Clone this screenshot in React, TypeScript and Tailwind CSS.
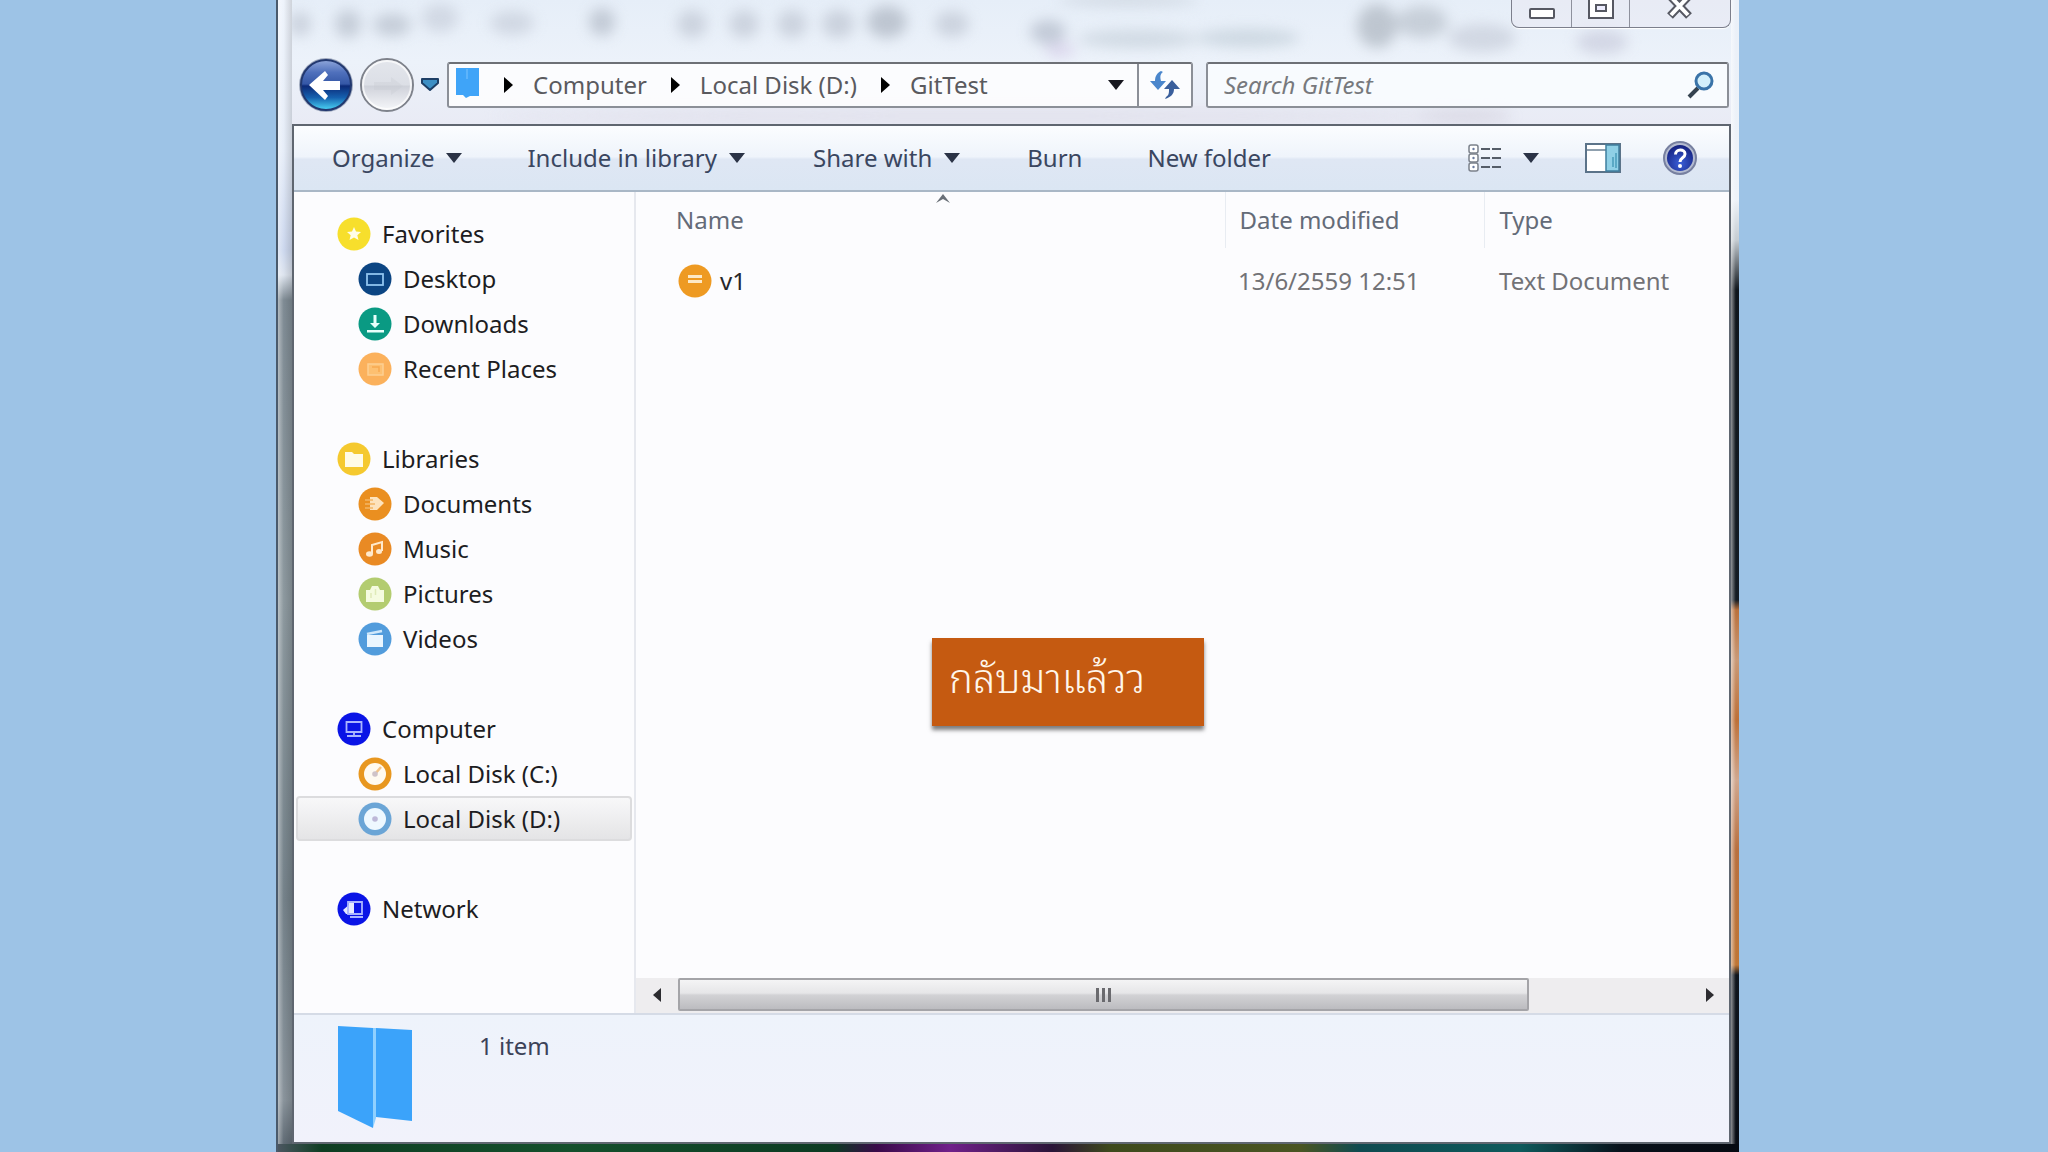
import React from "react";

function DownArrow({ className = "" }: { className?: string }) {
  return (
    <svg viewBox="0 0 16 10" className={`h-[10px] w-4 shrink-0 ${className}`} aria-hidden="true">
      <path d="M0 0h16l-8 10z" fill="currentColor" />
    </svg>
  );
}

function RightArrow() {
  return (
    <svg viewBox="0 0 9 16" className="h-4 w-[9px] shrink-0 text-black" aria-hidden="true">
      <path d="M0 0l9 8-9 8z" fill="currentColor" />
    </svg>
  );
}

function Glass() {
  const blobs: [number, number, number, number, string][] = [
    [8, 24, 11, 12, "#c3cad6"],
    [56, 24, 13, 14, "#bcc4d0"],
    [100, 25, 19, 11, "#bcc4d0"],
    [148, 18, 18, 14, "#ccd3df"],
    [220, 23, 22, 12, "#cbd2de"],
    [310, 22, 13, 14, "#b9c1cd"],
    [400, 24, 15, 14, "#c5ccd8"],
    [452, 24, 15, 14, "#c5ccd8"],
    [500, 24, 15, 14, "#c5ccd8"],
    [546, 24, 16, 14, "#c3cad6"],
    [595, 22, 20, 16, "#b3bbc7"],
    [660, 24, 17, 13, "#c5ccd8"],
    [756, 32, 18, 12, "#b9c1cf"],
    [768, 50, 15, 7, "#d8d0ea"],
    [846, 39, 60, 9, "#cad4de"],
    [956, 38, 52, 9, "#c6d2dc"],
    [836, 0, 70, 6, "#ccd4de"],
    [1085, 26, 20, 22, "#b4bcc6"],
    [1130, 22, 26, 16, "#bfc7d1"],
    [1190, 38, 34, 14, "#ccd2de"],
    [1310, 42, 26, 12, "#cdd0e0"],
    [1170, 116, 50, 7, "#d5d3df"],
    [700, 116, 500, 5, "#dcdae6"],
  ];
  return (
    <svg className="pointer-events-none absolute inset-x-0 top-0 h-[124px] w-full opacity-80" aria-hidden="true">
      <defs>
        <filter id="soft" x="-10%" y="-50%" width="120%" height="200%" colorInterpolationFilters="sRGB">
          <feGaussianBlur stdDeviation="7" />
        </filter>
      </defs>
      <g filter="url(#soft)">
        {blobs.map(([cx, cy, rx, ry, fill], i) => (
          <ellipse key={i} cx={cx} cy={cy} rx={rx} ry={ry} fill={fill} />
        ))}
      </g>
    </svg>
  );
}

function CaptionButtons() {
  return (
    <div className="relative mr-0 ml-auto flex h-[28px] w-[220px] rounded-b-lg border border-t-0 border-[#7c7f8c] bg-[#e9eaf3]/60 shadow-[0_1px_1px_#ffffff]">
      <button aria-label="Minimize" className="flex w-[60px] items-start justify-center border-r border-[#8e919d] pt-2">
        <svg viewBox="0 0 26 11" className="h-[11px] w-[26px]">
          <rect x="1" y="1" width="24" height="9" rx="1" fill="#fff" stroke="#565862" strokeWidth="2" />
        </svg>
      </button>
      <button aria-label="Restore" className="flex w-[58px] items-start justify-center border-r border-[#8e919d]">
        <svg viewBox="0 0 26 19" className="h-[19px] w-[26px]">
          <path d="M1-4h24v22H1z" fill="#fff" stroke="#565862" strokeWidth="2" />
          <rect x="8" y="5" width="10" height="6" fill="#eef" stroke="#565862" strokeWidth="2" />
        </svg>
      </button>
      <button aria-label="Close" className="flex flex-1 items-start justify-center">
        <svg viewBox="0 0 26 19" className="h-[19px] w-[26px]">
          <path d="M3-4L22 16M22-4L3 16" stroke="#565862" strokeWidth="8" />
          <path d="M4-3L21 15M21-3L4 15" stroke="#fff" strokeWidth="4" />
        </svg>
      </button>
    </div>
  );
}

function NavButtons() {
  return (
    <div className="flex h-14 w-[155px] shrink-0 items-center">
      <button aria-label="Back" className="ml-[6px]">
        <svg viewBox="0 0 56 56" className="size-14">
          <defs>
            <linearGradient id="back" x1="0" y1="0" x2="0" y2="1">
              <stop offset="0" stopColor="#8fa6da" />
              <stop offset="0.25" stopColor="#4f70bc" />
              <stop offset="0.48" stopColor="#3557a6" />
              <stop offset="0.52" stopColor="#0c2a78" />
              <stop offset="0.75" stopColor="#1560ae" />
              <stop offset="1" stopColor="#4cd6f6" />
            </linearGradient>
          </defs>
          <circle cx="28" cy="28" r="27" fill="#9fa9bd" />
          <circle cx="28" cy="28" r="25" fill="url(#back)" stroke="#22386f" strokeWidth="2" />
          <path d="M11 28L27 14l3 4-5 6h17v9H25l5 6-3 4z" fill="#fff" />
        </svg>
      </button>
      <button aria-label="Forward" className="ml-[5px]">
        <svg viewBox="0 0 56 56" className="size-14">
          <defs>
            <linearGradient id="fwd" x1="0" y1="0" x2="0" y2="1">
              <stop offset="0" stopColor="#e3e6ec" />
              <stop offset="0.5" stopColor="#dcdfe6" />
              <stop offset="0.52" stopColor="#cfd2da" />
              <stop offset="1" stopColor="#f7f8fb" />
            </linearGradient>
          </defs>
          <circle cx="28" cy="28" r="26" fill="url(#fwd)" stroke="#7e828b" strokeWidth="2" />
          <circle cx="28" cy="28" r="24" fill="none" stroke="#fff" strokeOpacity="0.7" strokeWidth="2" />
          <path d="M44 29L32 20v5H15v8h17v5z" fill="#c6c9d1" opacity="0.3" />
        </svg>
      </button>
      <button aria-label="Recent pages" className="ml-[5px]">
        <svg viewBox="0 0 20 14" className="h-[14px] w-5">
          <path d="M2 1h16v4l-8 7-8-7z" fill="#3d8fc4" stroke="#1d3f66" strokeWidth="2" strokeLinejoin="round" />
        </svg>
      </button>
    </div>
  );
}

function AddressBar() {
  return (
    <nav aria-label="Address" className="flex h-[46px] min-w-0 flex-1 rounded-[3px] border-2 border-[#8b8f97] border-t-[#6d7076] bg-white/80 text-[#5a5a5e]">
      <svg viewBox="0 0 23 30" className="mt-[4px] ml-[7px] h-[30px] w-[23px] shrink-0" aria-hidden="true">
        <path d="M0 0h23v28h-9l-4 2-3-3H0z" fill="#3fa4f8" />
        <path d="M11 1v10" stroke="#7cc4ff" strokeWidth="1" />
      </svg>
      <div className="flex min-w-0 flex-1 items-center pl-[25px] whitespace-nowrap">
        <RightArrow />
        <button className="ml-5">Computer</button>
        <span className="ml-6 flex"><RightArrow /></span>
        <button className="ml-5">Local Disk (D:)</button>
        <span className="ml-6 flex"><RightArrow /></span>
        <button className="ml-5">GitTest</button>
      </div>
      <button aria-label="Previous locations" className="flex w-[29px] items-center justify-start text-[#17171f]">
        <DownArrow />
      </button>
      <button aria-label="Refresh" className="flex w-[54px] items-center justify-center border-l-2 border-[#8b8f97]">
        <svg viewBox="0 0 32 28" className="h-7 w-8">
          <path d="M12 0C8 2 6 5 6 10H1l8 9 8-9h-5c-1-4-1-7 2-9z" fill="#4a86cc" />
          <path d="M16 28c6-2 9-5 9-10h6l-8-9-8 9h5c0 4 0 6-3 8z" fill="#3a5f9c" />
        </svg>
      </button>
    </nav>
  );
}

function SearchBox() {
  return (
    <div className="ml-[13px] flex h-[46px] w-[36.4%] shrink-0 items-center rounded-[3px] border-2 border-[#8b8f97] border-t-[#6d7076] bg-[#fafdff]/85 pr-3 pl-4">
      <input
        aria-label="Search GitTest"
        placeholder="Search GitTest"
        className="min-w-0 flex-1 bg-transparent italic outline-none placeholder:text-[#77797d]"
      />
      <button aria-label="Search">
        <svg viewBox="0 0 28 28" className="size-7">
          <path d="M11 17L2 26" stroke="#35424f" strokeWidth="4" />
          <circle cx="17" cy="10" r="8" fill="#d3effb" stroke="#3a73a8" strokeWidth="3" />
        </svg>
      </button>
    </div>
  );
}

function Toolbar() {
  return (
    <div className="flex h-[66px] shrink-0 items-center border-b-2 border-[#a9b7c6] bg-[linear-gradient(#fbfdff_0%,#eff4fb_48%,#dfe7f4_52%,#dbe6f3_100%)] pr-8 pl-[38px] whitespace-nowrap text-[#3a4660]">
      <button className="flex items-center gap-3">Organize <DownArrow className="text-[#2b3346]" /></button>
      <button className="ml-[65px] flex items-center gap-3">Include in library <DownArrow className="text-[#2b3346]" /></button>
      <button className="ml-[68px] flex items-center gap-3">Share with <DownArrow className="text-[#2b3346]" /></button>
      <button className="ml-[67px]">Burn</button>
      <button className="ml-[65px]">New folder</button>
      <button aria-label="Change your view" className="ml-auto">
        <svg viewBox="0 0 34 28" className="h-7 w-[34px]">
          {[1, 10, 19].map((y) => (
            <g key={y}>
              <rect x="1" y={y} width="9" height="8" rx="2" fill="#fff" stroke="#7b818b" strokeWidth="1.5" />
              <circle cx="5.5" cy={y + 4} r="1.2" fill="#6a7ba0" />
              <path d={`M13 ${y + 4}h9M24 ${y + 4}h9`} stroke="#555d68" strokeWidth="2" />
            </g>
          ))}
        </svg>
      </button>
      <button aria-label="More view options" className="ml-[21px] flex"><DownArrow className="text-[#2b3346]" /></button>
      <button aria-label="Show the preview pane" className="ml-[46px]">
        <svg viewBox="0 0 36 30" className="h-[30px] w-9">
          <rect x="1" y="1" width="34" height="28" fill="#fff" stroke="#5b7389" strokeWidth="2" />
          <path d="M2 7h19" stroke="#6a8093" strokeWidth="1.5" />
          <rect x="21" y="2" width="13" height="26" fill="#8fd0e6" stroke="#3f7f9f" strokeWidth="1.5" />
          <path d="M28 14v10M31 10v15" stroke="#4a9cba" strokeWidth="1.5" />
        </svg>
      </button>
      <button aria-label="Get help" className="ml-[42px]">
        <svg viewBox="0 0 34 34" className="size-[34px]">
          <defs>
            <radialGradient id="help" cx="0.5" cy="0.7" r="0.7">
              <stop offset="0" stopColor="#3a5fd8" />
              <stop offset="1" stopColor="#14207e" />
            </radialGradient>
          </defs>
          <circle cx="17" cy="17" r="16" fill="#b4bbd0" stroke="#7780a0" strokeWidth="2" />
          <circle cx="17" cy="17" r="13" fill="url(#help)" />
          <path d="M12.500 13.500c0-6 9.500-6 9.500-.5 0 4-5 3.500-5 8" fill="none" stroke="#fff" strokeWidth="3" />
          <circle cx="17" cy="25" r="2" fill="#fff" />
        </svg>
      </button>
    </div>
  );
}

type Kind =
  | "star" | "desktop" | "download" | "recent" | "folder" | "doc" | "music"
  | "picture" | "video" | "computer" | "diskC" | "diskD" | "network" | "text";

const discColor: Record<Kind, string> = {
  star: "#f7df2c",
  desktop: "#0c4583",
  download: "#0a9a83",
  recent: "#fbb15c",
  folder: "#f5c92f",
  doc: "#ea8f20",
  music: "#e98a24",
  picture: "#b3cc70",
  video: "#529cdc",
  computer: "#0a14e6",
  diskC: "#e8971f",
  diskD: "#6ba5d6",
  network: "#0a14e6",
  text: "#ee9a22",
};

function glyph(kind: Kind) {
  switch (kind) {
    case "star":
      return <path d="M17 10l2 4.500 5 .5-3.700 3.200 1.200 4.800L17 20.500 12.500 23l1.200-4.800L10 15l5-.5z" fill="#fffde8" />;
    case "desktop":
      return <rect x="9" y="12" width="16" height="11" fill="none" stroke="#8fc4ef" strokeWidth="1.800" />;
    case "download":
      return <path d="M15.500 8h3v8H22l-5 5-5-5h3.500zM9 23h17v2.500H9z" fill="#e8fffb" />;
    case "recent":
      return <><rect x="10" y="12" width="15" height="11" fill="#fdc071" stroke="#fdcf92" strokeWidth="1.500" /><path d="M14 15h7v5" fill="none" stroke="#f8a950" strokeWidth="1.500" /></>;
    case "folder":
      return <path d="M8 10h7l2 2h9v13H8z" fill="#fffbe6" />;
    case "doc":
      return <><path d="M12 10h7l7 6-7 7h-7z" fill="#fde3bd" /><path d="M7 13h8M7 17h10M7 21h8" stroke="#f4b765" strokeWidth="1.500" /></>;
    case "music":
      return <><path d="M14 22v-9l10-3v9" fill="none" stroke="#ffe9cc" strokeWidth="2" /><ellipse cx="11.500" cy="22" rx="3.500" ry="2.700" fill="#ffe9cc" /><ellipse cx="21" cy="19.500" rx="3" ry="2.500" fill="#ffe9cc" /></>;
    case "picture":
      return <><path d="M8 13h4l2-4h6l2 4h4v12H8z" fill="#f5fbe0" /><path d="M17.500 12v6M13 16v5" stroke="#dfeab8" strokeWidth="1.500" /></>;
    case "video":
      return <><path d="M9 13h16v12H9z" fill="#eaf6ff" /><path d="M9 12l15-3" stroke="#cfe8fb" strokeWidth="2.500" /></>;
    case "computer":
      return <path d="M9.500 10h15v10h-15zM17 20v3M10 24h14" fill="none" stroke="#a9b4ff" strokeWidth="1.800" />;
    case "network":
      return <><path d="M6 18l8-7v11H9z" fill="#e6eaff" /><path d="M11 10h14v12H11zM13 25h13" fill="none" stroke="#a9b4ff" strokeWidth="1.800" /><path d="M12 11h5v10h-5z" fill="#e6eaff" /></>;
    case "diskC":
      return <><circle cx="17" cy="17" r="11" fill="#fffaf0" /><path d="M17 17l6-7" stroke="#f3c489" strokeWidth="2.500" /><circle cx="17" cy="17" r="2.800" fill="#cfc3c8" /></>;
    case "diskD":
      return <><circle cx="17" cy="17" r="11" fill="#eef8ff" /><circle cx="17" cy="17" r="2.800" fill="#bdb8d8" /></>;
    case "text":
      return <path d="M10 11h14v3H10zM10 16h14v3H10z" fill="#fde9c6" />;
  }
}

function Disc({ kind }: { kind: Kind }) {
  return (
    <svg viewBox="0 0 34 34" className="size-[34px] shrink-0" aria-hidden="true">
      <circle cx="17" cy="17" r="16.500" fill={discColor[kind]} />
      {glyph(kind)}
    </svg>
  );
}

const groups: { head: [Kind, string]; items: [Kind, string][] }[] = [
  { head: ["star", "Favorites"], items: [["desktop", "Desktop"], ["download", "Downloads"], ["recent", "Recent Places"]] },
  { head: ["folder", "Libraries"], items: [["doc", "Documents"], ["music", "Music"], ["picture", "Pictures"], ["video", "Videos"]] },
  { head: ["computer", "Computer"], items: [["diskC", "Local Disk (C:)"], ["diskD", "Local Disk (D:)"]] },
  { head: ["network", "Network"], items: [] },
];

function Sidebar() {
  return (
    <nav aria-label="Folders" className="flex w-[342px] shrink-0 flex-col gap-[45px] border-r-2 border-[#e6e8ee] px-[2px] pt-[19px] text-[#1d1d22]">
      {groups.map((g) => (
        <div key={g.head[1]}>
          <a href="#" className="flex h-[45px] items-center gap-[11px] pl-[41px]">
            <Disc kind={g.head[0]} />
            {g.head[1]}
          </a>
          {g.items.map(([kind, label]) => (
            <a
              key={label}
              href="#"
              className={
                label === "Local Disk (D:)"
                  ? "flex h-[45px] items-center gap-[11px] rounded-[4px] border-2 border-[#dcdcde] bg-[linear-gradient(#f8f8f9,#e4e4e6)] pl-[60px]"
                  : "flex h-[45px] items-center gap-[11px] pl-[62px]"
              }
            >
              <Disc kind={kind} />
              {label}
            </a>
          ))}
        </div>
      ))}
    </nav>
  );
}

function FileTable() {
  return (
    <table className="w-full table-fixed border-collapse text-left">
      <colgroup>
        <col className="w-[589px]" />
        <col className="w-[259px]" />
        <col />
      </colgroup>
      <thead>
        <tr className="h-14 text-[#646b78]">
          <th className="relative border-r border-[#e8ecf2] pl-10 font-normal">
            Name
            <svg viewBox="0 0 14 9" className="absolute top-[2px] left-[300px] h-[9px] w-[14px]" aria-hidden="true">
              <path d="M0 9l7-9 7 9-7-4z" fill="#6a7078" />
            </svg>
          </th>
          <th className="border-r border-[#e8ecf2] pl-[14px] font-normal">Date modified</th>
          <th className="pl-[15px] font-normal">Type</th>
        </tr>
      </thead>
      <tbody>
        <tr className="h-[66px] text-[#727276]">
          <td className="pl-[42px] text-[#26262a]">
            <span className="flex items-center gap-2"><Disc kind="text" /> v1</span>
          </td>
          <td className="pl-[13px]">13/6/2559 12:51</td>
          <td className="pl-[15px]">Text Document</td>
        </tr>
      </tbody>
    </table>
  );
}

function ScrollBar() {
  return (
    <div className="mt-auto flex h-[35px] items-stretch bg-[#eeedef] pb-[2px]">
      <button aria-label="Scroll left" className="flex w-[42px] items-center justify-center text-[#2c2c30]">
        <svg viewBox="0 0 8 14" className="h-[14px] w-2"><path d="M8 0L0 7l8 7z" fill="currentColor" /></svg>
      </button>
      <div className="flex min-w-0 flex-1">
        <div className="flex w-[84%] items-center justify-center gap-[3px] rounded-[2px] border-2 border-[#a4a4a8] bg-[linear-gradient(#f4f4f5_0%,#e6e6e8_45%,#d2d2d5_52%,#bcbcc0_100%)]">
          <span className="h-[14px] w-[3px] bg-[#6a6a6e]" />
          <span className="h-[14px] w-[3px] bg-[#6a6a6e]" />
          <span className="h-[14px] w-[3px] bg-[#6a6a6e]" />
        </div>
      </div>
      <button aria-label="Scroll right" className="flex w-[38px] items-center justify-center text-[#2c2c30]">
        <svg viewBox="0 0 8 14" className="h-[14px] w-2"><path d="M0 0l8 7-8 7z" fill="currentColor" /></svg>
      </button>
    </div>
  );
}

function StatusBar() {
  return (
    <footer className="flex h-[129px] shrink-0 items-start border-t-2 border-[#d5dbe6] bg-[linear-gradient(#eef3fb,#f1f2fb)] pt-[11px] pl-11 text-[#3c4258]">
      <svg viewBox="0 0 74 102" className="h-[102px] w-[74px]" aria-hidden="true">
        <path d="M0 0l35 2v100L0 85z" fill="#3ba3fa" />
        <path d="M38 2l36 2v91l-36-4z" fill="#3ba3fa" />
        <path d="M35 2h3v90l-3 10z" fill="#8fd0ff" />
      </svg>
      <p className="ml-[67px] leading-10">1 item</p>
    </footer>
  );
}

export default function App() {
  return (
    <div className="flex min-h-screen bg-[#9dc3e6] pr-[309px] pl-[276px] font-['Noto_Sans','Open_Sans',sans-serif] text-2xl">
      <div className="flex min-w-0 flex-1 flex-col border-l-2 border-[#4a5a6c] bg-[#e9eff8]">
        <div className="flex flex-1">
          <div className="w-[14px] shrink-0 bg-[linear-gradient(90deg,#ffffff66,#00000000_40%,#00000022),linear-gradient(#eef3fb_0px,#e6edf8_150px,#cdd8ee_250px,#dde4ee_275px,#7f8b94_300px,#8d999f_600px,#75828a_900px,#8a949c_1100px,#5b6670_1150px)]" />
          <div className="relative flex min-w-0 flex-1 flex-col">
            <header className="relative h-[124px] shrink-0 bg-[linear-gradient(#e6eef8,#ecf2fa_50%,#e9ebf5)]">
              <Glass />
              <div className="relative">
                <CaptionButtons />
                <div className="mt-[29px] mr-[2px] flex h-14 items-center">
                  <NavButtons />
                  <AddressBar />
                  <SearchBox />
                </div>
              </div>
            </header>
            <main className="flex flex-1 flex-col border-2 border-[#5f6670] bg-[#fcfcfe]">
              <Toolbar />
              <div className="flex flex-1">
                <Sidebar />
                <section className="relative flex min-w-0 flex-1 flex-col">
                  <FileTable />
                  <ScrollBar />
                  <div className="absolute top-[446px] left-[296px] h-[88px] w-[272px] bg-[#c55a11] pl-[17px] font-['Noto_Sans_Thai_Looped','Noto_Sans',sans-serif] text-[40px] leading-[74px] font-light whitespace-nowrap text-[#fff6ea] shadow-[0_4px_4px_#00000080]">
                    กลับมาแล้วว
                  </div>
                </section>
              </div>
              <StatusBar />
            </main>
          </div>
          <div className="w-2 shrink-0 bg-[linear-gradient(90deg,#ffffff88,#ffffff00_60%),linear-gradient(#eaf0f8_0px,#eef3f9_200px,#c5ccd2_240px,#10161c_290px,#141c24_600px,#b9703c_610px,#c99a78_660px,#bd7038_720px,#d0a890_780px,#b8703f_850px,#bf7636_965px,#10161e_975px,#080c14_1152px)]" />
        </div>
        <div className="h-2 shrink-0 bg-[linear-gradient(90deg,#4b5660_0%,#0e3d22_3%,#14502c_20%,#0c3a22_38%,#3a0a4a_41%,#70208a_46%,#2a1438_53%,#3e4a1c_57%,#4a5522_70%,#0f4a50_74%,#0e5a5c_85%,#08101a_92%,#060a12_100%)]" />
      </div>
    </div>
  );
}
